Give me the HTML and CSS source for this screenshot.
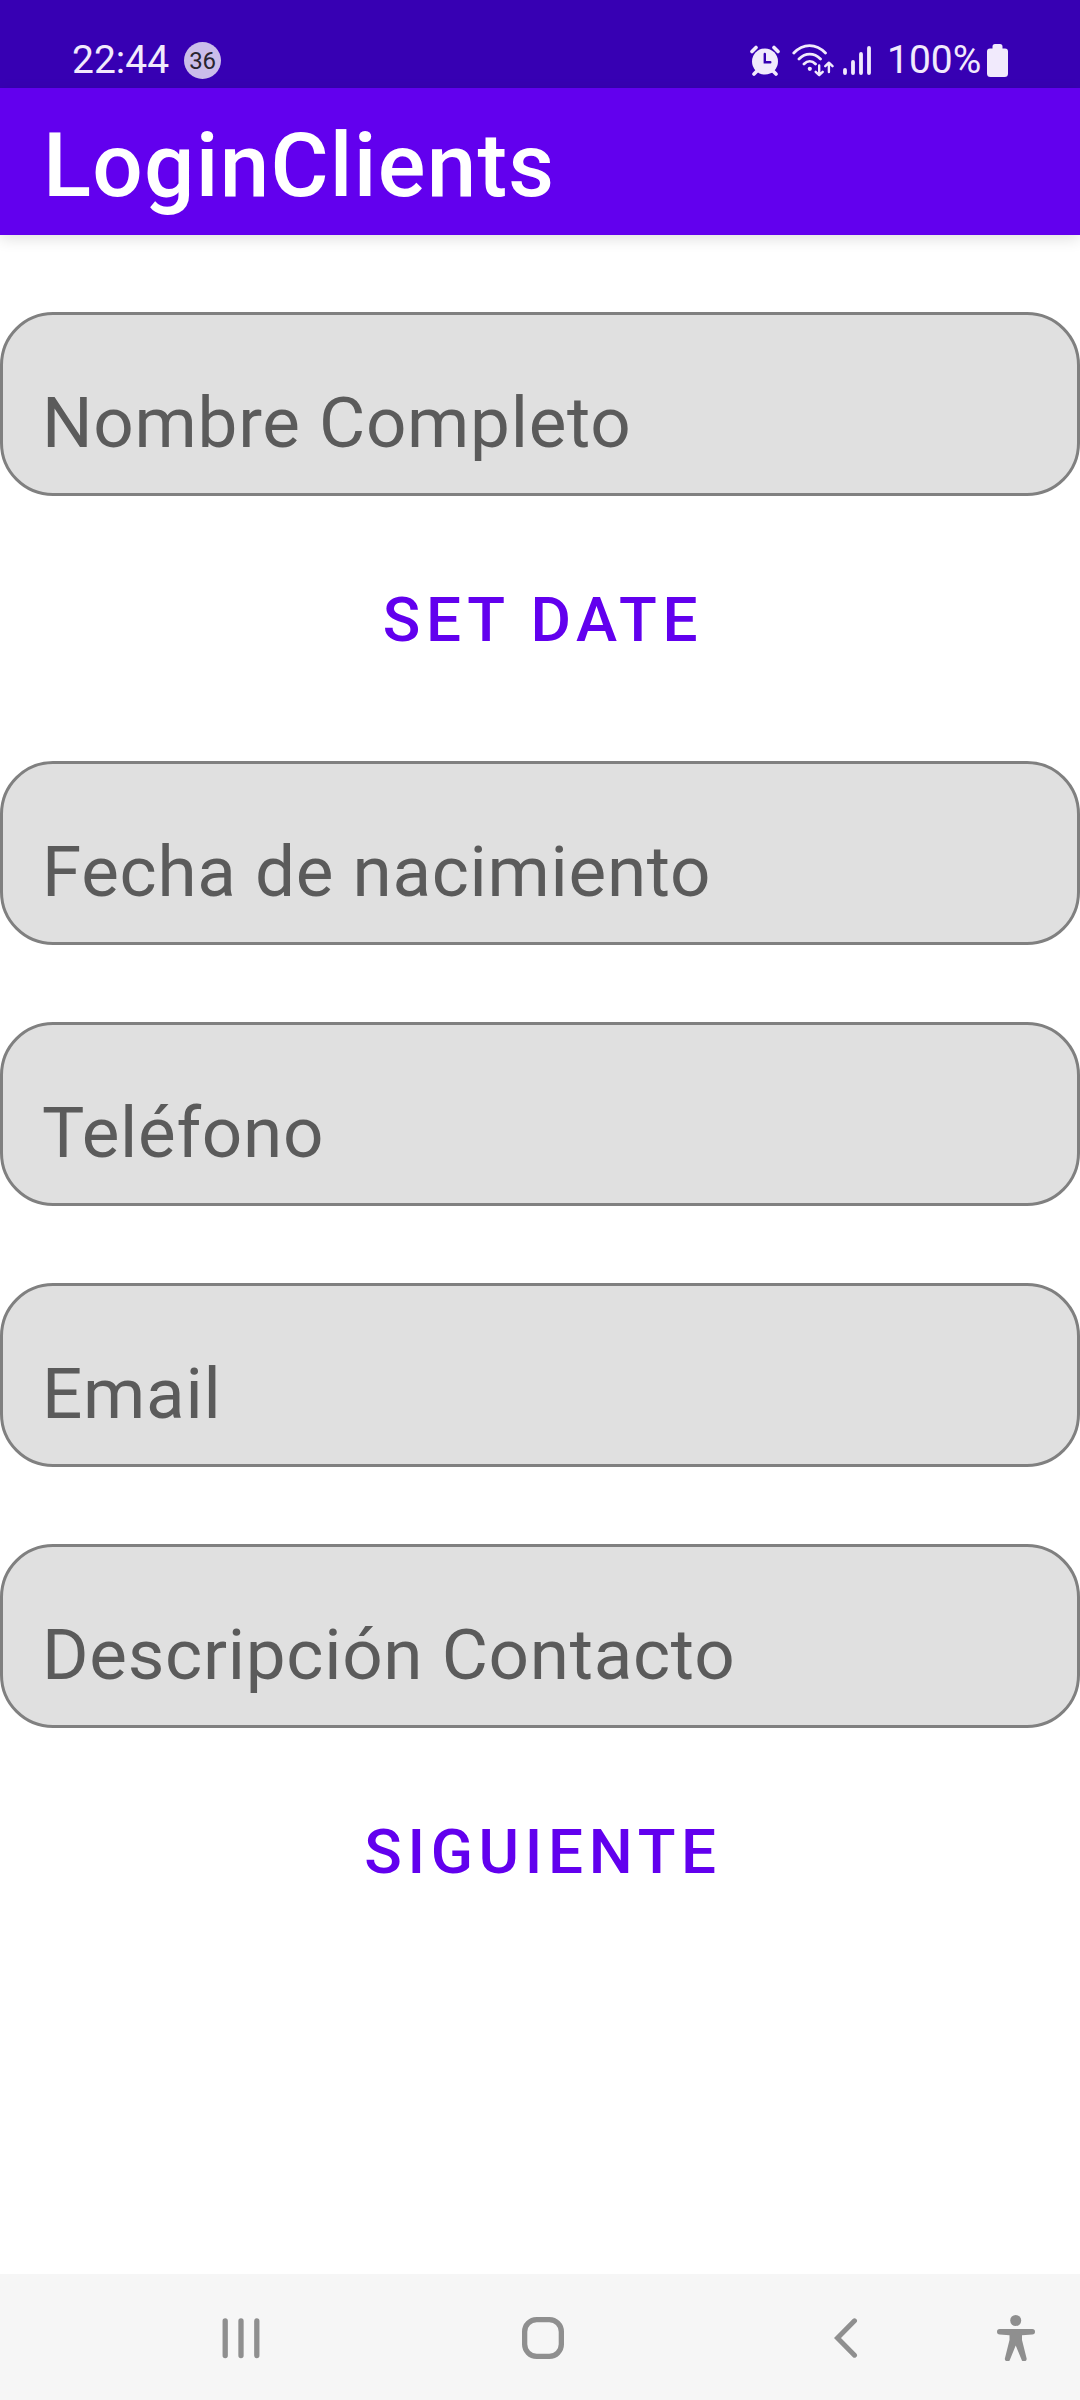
FILE: index.html
```html
<!DOCTYPE html>
<html lang="es">
<head>
<meta charset="utf-8">
<title>LoginClients</title>
<link rel="stylesheet" href="styles.css">
</head>
<body>
<div class="screen">
  <header class="status">
    <span class="clock">22:44</span><span class="badge">36</span>
    <div class="indicators">
      <svg class="alarm" width="30" height="34" viewBox="0 0 30 34"><path d="M2 7.500l4-4M28 7.500l-4-4M6.500 27.500l-2.500 2.500M23.500 27.500l2.500 2.500" stroke="#f1eafc" stroke-width="3.600" stroke-linecap="round"/><circle cx="15" cy="17.500" r="13" fill="#f1eafc"/><path d="M14.800 10v8.200h5.500" fill="none" stroke="#3700b3" stroke-width="2.400" stroke-linecap="round"/></svg>
      <svg class="wifi" width="42" height="34" viewBox="0 0 42 34"><g fill="none" stroke="#f1eafc" stroke-width="2.800" stroke-linecap="round" stroke-linejoin="round"><path d="M1.800 9C11 -.9 24 -.9 33.500 9M7 15c6.500-6.500 15-6.500 21.500 0M12 20c3.500-3.500 8-3.500 11.500 0"/><path d="M27.200 21.500v9.500m-3.500-3.200l3.500 3.400 3.500-3.400M36.900 28v-9m-3.600 3.200l3.600-3.500 3.600 3.500" stroke-width="2.400"/></g><circle cx="17.800" cy="24.800" r="2.100" fill="#f1eafc"/></svg>
      <svg class="signal" width="28" height="34" viewBox="0 0 28 34"><path d="M2 29v-3M10 29v-11M18 29v-19M26 29v-25" stroke="#f1eafc" stroke-width="3.800" stroke-linecap="round"/></svg>
      <span class="percent">100%</span>
      <svg class="battery" width="21" height="34" viewBox="0 0 21 34"><path d="M8 0h5q2.500 0 2.500 2.500v2h2.500q3 0 3 3v22q0 3.500-3.500 3.500h-14q-3.500 0-3.500-3.500v-22q0-3 3-3h2.500v-2q0-2.500 2.500-2.500z" fill="#f1eafc"/></svg>
    </div>
  </header>
  <h1 class="appbar">LoginClients</h1>
  <main class="form">
    <div class="field">Nombre Completo</div>
    <button class="action">SET DATE</button>
    <div class="field">Fecha de nacimiento</div>
    <div class="field">Teléfono</div>
    <div class="field">Email</div>
    <div class="field">Descripción Contacto</div>
    <button class="action">SIGUIENTE</button>
  </main>
  <nav class="navbar">
    <svg class="recents" width="38" height="42" viewBox="0 0 38 42"><path d="M3.200 4v34.500M19 4v34.500M34.800 4v34.500" stroke="#8f8f8f" stroke-width="5.300" stroke-linecap="round"/></svg>
    <svg class="home" width="42" height="42" viewBox="0 0 42 42"><rect x="2.650" y="2.650" width="36.700" height="36.700" rx="12" fill="none" stroke="#8f8f8f" stroke-width="5.300"/></svg>
    <svg class="back" width="24" height="42" viewBox="0 0 24 42"><path d="M20.500 3.800L3.500 21l17 17.200" fill="none" stroke="#8f8f8f" stroke-width="5" stroke-linecap="round"/></svg>
    <svg class="access" width="38" height="46" viewBox="0 0 38 46"><circle cx="18.700" cy="5.500" r="5.500" fill="#8f8f8f"/><path d="M2.700 14h32.600a2.700 2.700 0 0 1 0 5.400L25 20.300v4.700l4.500 18a2.600 2.600 0 0 1-5 1.500L18.700 30.500 13 44.500a2.600 2.600 0 0 1-5-1.500l4.500-18v-4.700L2.700 19.400a2.700 2.700 0 0 1 0-5.400z" fill="#8f8f8f"/></svg>
  </nav>
</div>
</body>
</html>
```
FILE: styles.css
```css
* { box-sizing: border-box; }
body { margin: 0; font-family: Roboto, sans-serif; background: #fff; }
.screen { width: 1080px; height: 2400px; display: flex; flex-direction: column; }
svg { display: block; flex: none; }
.status { height: 88px; background: #3700b3; color: #f1eafc; display: flex; padding: 38px 72px 0 72px; font-size: 39px; line-height: 44px; }
.badge { width: 37px; height: 37px; border-radius: 50%; margin: 4px 0 0 15px; background: #cbbdea; color: #29242f; font-size: 24px; line-height: 39px; text-align: center; }
.indicators { margin-left: auto; display: flex; }
.indicators svg { margin-top: 6px; }
.wifi { margin-left: 12px; }
.signal { margin-left: 9px; }
.percent { margin-left: 16px; width: 93px; white-space: nowrap; }
.battery { margin-left: 7px; }
.appbar { margin: 0; height: 147px; background: #6200ee; color: #fff; font-size: 89px; font-weight: 500; letter-spacing: 1.25px; line-height: 156px; padding-left: 43px; box-shadow: 0 4px 14px rgba(0, 0, 0, .12); }
.form { flex: 1; display: flex; flex-direction: column; padding-top: 77px; }
.field { height: 184px; border: 3px solid #808080; border-radius: 53px; background: #e0e0e0; color: #5b5b5b; font-size: 71px; line-height: 82px; padding: 67px 39px 0; margin-bottom: 77px; letter-spacing: .72px; }
.action { border: 0; background: none; color: #6200ee; font: 500 62px/74px Roboto, sans-serif; letter-spacing: 5.7px; height: 74px; margin: 10px 0 104px; padding: 0 0 0 6px; }
.navbar { height: 126px; background: #f6f6f6; display: flex; align-items: center; padding: 2px 45px 0 222px; }
.home { margin-left: 262px; }
.back { margin-left: 270px; }
.access { margin-left: auto; }
```
